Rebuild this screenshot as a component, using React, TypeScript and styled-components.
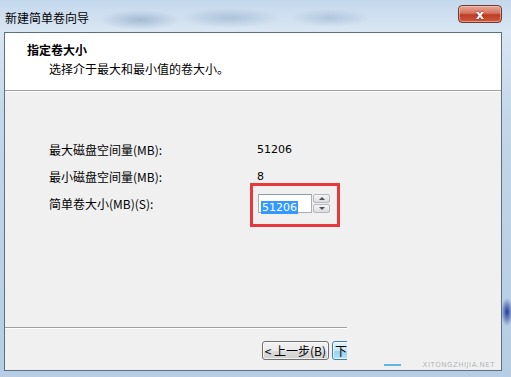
import React from "react";
import styled, { createGlobalStyle } from "styled-components";

const GlobalStyle = createGlobalStyle`
  html, body {
    margin: 0;
    padding: 0;
    background: #bcd2e8;
  }
  body {
    font-family: "Noto Sans CJK SC", "DejaVu Sans", sans-serif;
    font-size: 12px;
    color: #000;
  }
`;

const Window = styled.div`
  width: 511px;
  height: 377px;
  display: flex;
  flex-direction: column;
  overflow: hidden;
  box-sizing: border-box;
  padding: 0 9px 6px 4px;
  background:
    radial-gradient(ellipse 40px 10px at 140px 20px, rgba(110, 140, 175, 0.45), transparent),
    radial-gradient(ellipse 50px 10px at 230px 18px, rgba(120, 150, 185, 0.4), transparent),
    radial-gradient(ellipse 40px 9px at 330px 18px, rgba(120, 150, 185, 0.35), transparent),
    radial-gradient(ellipse 6px 14px at 507px 312px, rgba(20, 40, 140, 0.9), transparent),
    linear-gradient(180deg, #c4d8ec 0%, #d9e6f3 30px, #c3d6ea 120px, #b6cde4 100%);
`;

const TitleBar = styled.div`
  height: 32px;
  flex: none;
  display: flex;
  align-items: flex-start;
  justify-content: space-between;
`;

const Caption = styled.span`
  margin: 11px 0 0 1px;
  font-size: 12px;
  line-height: 14px;
  color: #000;
`;

const CloseButton = styled.div`
  width: 44px;
  height: 18px;
  margin: 5px 0 0 0;
  box-sizing: border-box;
  border: 1px solid #6a3a32;
  border-radius: 4px;
  background: linear-gradient(180deg, #e9a696 0%, #d7735f 45%, #bd3b25 55%, #cf5a3e 100%);
  box-shadow: inset 0 0 0 1px rgba(255, 220, 210, 0.5);
  display: flex;
  align-items: center;
  justify-content: center;
  color: #fff;
  font-family: "DejaVu Sans", sans-serif;
  font-weight: bold;
  font-size: 13px;
  line-height: 1;
  text-shadow: 0 0 2px #5a1a10;
`;

const Client = styled.div`
  flex: 1;
  display: flex;
  flex-direction: column;
  border: 1px solid #5c6f82;
  background: #f0f0f0;
  position: relative;
`;

const Header = styled.div`
  height: 58px;
  flex: none;
  background: #fff;
  border-bottom: 1px solid #a0a0a0;
  box-shadow: 0 1px 0 #fff;
  padding: 9px 0 0 22px;
  box-sizing: border-box;
`;

const HeaderTitle = styled.div`
  font-weight: bold;
  font-size: 12px;
  line-height: 16px;
`;

const HeaderSub = styled.div`
  margin: 3px 0 0 22px;
  font-size: 12px;
  line-height: 16px;
`;

const Body = styled.div`
  flex: 1;
  display: grid;
  grid-template-columns: 208px auto;
  grid-auto-rows: 27px;
  align-content: start;
  align-items: center;
  padding: 45px 0 0 44px;
`;

const Label = styled.span`
  line-height: 16px;
`;

const Value = styled.span`
  font-family: "DejaVu Sans", sans-serif;
  font-size: 11px;
  line-height: 16px;
`;

const SpinWrap = styled.div`
  position: relative;
  display: flex;
  width: 72px;
  height: 19px;
  margin-left: 1px;
`;

const Highlight = styled.div`
  position: absolute;
  left: -8px;
  top: -11px;
  width: 90px;
  height: 44px;
  box-sizing: border-box;
  border: 3px solid #e8383d;
`;

const SpinInput = styled.div`
  flex: 1;
  box-sizing: border-box;
  border: 1px solid #abadb3;
  border-top-color: #8e9aa8;
  background: #fff;
  padding: 2px 0 0 2px;
`;

const Selected = styled.span`
  background: #3399ff;
  color: #fff;
  font-family: "DejaVu Sans", sans-serif;
  font-size: 11px;
  line-height: 13px;
  padding: 0 1px;
`;

const SpinButtons = styled.div`
  width: 17px;
  display: flex;
  flex-direction: column;
  gap: 1px;
  margin-left: 1px;
`;

const SpinArrow = styled.div<{ $down?: boolean }>`
  flex: 1;
  box-sizing: border-box;
  border: 1px solid #b5b8bd;
  border-radius: 2px;
  background: linear-gradient(180deg, #f6f6f6, #dcdcdc);
  display: flex;
  align-items: center;
  justify-content: center;

  &::after {
    content: "";
    border-left: 3px solid transparent;
    border-right: 3px solid transparent;
    ${(p) =>
      p.$down ? "border-top: 3px solid #4a5058;" : "border-bottom: 3px solid #4a5058;"}
  }
`;

const Footer = styled.div`
  height: 43px;
  flex: none;
  position: relative;
`;

const FooterRule = styled.div`
  width: 342px;
  height: 1px;
  background: #a0a0a0;
  box-shadow: 0 1px 0 #fff;
`;

const ButtonRow = styled.div`
  width: 342px;
  display: flex;
  justify-content: flex-end;
  gap: 3px;
  margin-top: 13px;
  overflow: hidden;
`;

const Button = styled.div<{ $focused?: boolean }>`
  flex: none;
  height: 19px;
  min-width: ${(p) => (p.$focused ? "72px" : "0")};
  box-sizing: border-box;
  padding: 0 2px;
  border-radius: 3px;
  border: 1px solid ${(p) => (p.$focused ? "#3c7fb1" : "#707070")};
  background: ${(p) =>
    p.$focused
      ? "linear-gradient(180deg, #e5f4fc 0%, #c4e5f6 50%, #98d1ef 51%, #b6e0f5 100%)"
      : "linear-gradient(180deg, #f2f2f2 0%, #ebebeb 50%, #dddddd 51%, #cfcfcf 100%)"};
  box-shadow: inset 0 0 0 1px rgba(255, 255, 255, 0.7);
  display: flex;
  align-items: center;
  font-size: 12px;
  line-height: 14px;
  white-space: nowrap;
`;

const NextClip = styled.div`
  width: 15px;
  overflow: hidden;
  flex: none;
`;

const Watermark = styled.div`
  position: absolute;
  right: 6px;
  bottom: 1px;
  display: flex;
  align-items: center;
  gap: 22px;
  font-family: "DejaVu Sans", sans-serif;
  font-size: 7px;
  letter-spacing: 0.5px;
  color: rgba(90, 100, 110, 0.45);
`;

const Dash = styled.span`
  width: 17px;
  height: 2px;
  background: #5bb8e0;
`;

export default function App() {
  return (
    <>
      <GlobalStyle />
      <Window>
        <TitleBar>
          <Caption>新建简单卷向导</Caption>
          <CloseButton>x</CloseButton>
        </TitleBar>
        <Client>
          <Header>
            <HeaderTitle>指定卷大小</HeaderTitle>
            <HeaderSub>选择介于最大和最小值的卷大小。</HeaderSub>
          </Header>
          <Body>
            <Label>最大磁盘空间量(MB):</Label>
            <Value>51206</Value>
            <Label>最小磁盘空间量(MB):</Label>
            <Value>8</Value>
            <Label>简单卷大小(MB)(S):</Label>
            <SpinWrap>
              <Highlight />
              <SpinInput>
                <Selected>51206</Selected>
              </SpinInput>
              <SpinButtons>
                <SpinArrow />
                <SpinArrow $down />
              </SpinButtons>
            </SpinWrap>
          </Body>
          <Footer>
            <FooterRule />
            <ButtonRow>
              <Button>&lt; 上一步(B)</Button>
              <NextClip>
                <Button $focused>下</Button>
              </NextClip>
            </ButtonRow>
            <Watermark>
              <Dash />
              <span>XITONGZHIJIA.NET</span>
            </Watermark>
          </Footer>
        </Client>
      </Window>
    </>
  );
}
